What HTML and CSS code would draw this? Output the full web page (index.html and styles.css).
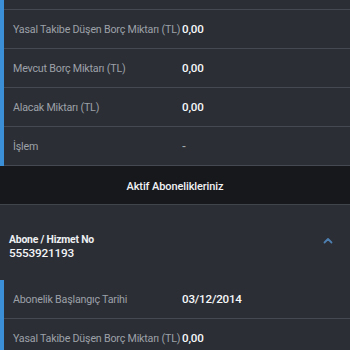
FILE: index.html
```html
<!DOCTYPE html>
<html lang="tr">
<head>
<meta charset="utf-8">
<link rel="stylesheet" href="styles.css">
</head>
<body>
<section class="details">
  <div class="row row-cut"></div>
  <div class="row"><span class="label">Yasal Takibe Düşen Borç Miktarı (TL)</span><span class="value">0,00</span></div>
  <div class="row"><span class="label">Mevcut Borç Miktarı (TL)</span><span class="value">0,00</span></div>
  <div class="row"><span class="label">Alacak Miktarı (TL)</span><span class="value">0,00</span></div>
  <div class="row"><span class="label">İşlem</span><span class="value dim">-</span></div>
</section>
<header class="section-title">Aktif Abonelikleriniz</header>
<div class="card-head">
  <div class="card-info">
    <div class="card-label">Abone / Hizmet No</div>
    <div class="card-number">5553921193</div>
  </div>
  <svg class="chevron" width="10" height="7" viewBox="0 0 10 7"><path d="M1.5 5.5 L5 2 L8.5 5.5" fill="none" stroke="#4d7fb0" stroke-width="1.8" stroke-linecap="round" stroke-linejoin="round"/></svg>
</div>
<section class="details">
  <div class="row"><span class="label">Abonelik Başlangıç Tarihi</span><span class="value">03/12/2014</span></div>
  <div class="row"><span class="label">Yasal Takibe Düşen Borç Miktarı (TL)</span><span class="value">0,00</span></div>
</section>
</body>
</html>
```
FILE: styles.css
```css
html, body {
  margin: 0;
  padding: 0;
  background: #2b2e35;
  font-family: Roboto, "Noto Sans", sans-serif;
  width: 350px;
  height: 350px;
  overflow: hidden;
}
.details {
  border-left: 4px solid #3a8fd6;
  background: #2b2e35;
}
.row {
  display: grid;
  grid-template-columns: 169px 1fr;
  align-items: center;
  height: 38px;
  padding-left: 9px;
  border-bottom: 1px solid #454951;
}
.row-cut {
  height: 9px;
}
.label {
  font-size: 10.7px;
  letter-spacing: -0.2px;
  color: #9da1a8;
  white-space: nowrap;
}
.value {
  font-size: 11.6px;
  letter-spacing: -0.2px;
  font-weight: 500;
  color: #f7f8fa;
}
.value.dim {
  color: #a4a8af;
}
.section-title {
  height: 39px;
  padding-top: 2px;
  box-sizing: border-box;
  background: #17181c;
  border-bottom: 1px solid #40444b;
  display: flex;
  align-items: center;
  justify-content: center;
  font-size: 11px;
  letter-spacing: -0.1px;
  font-weight: 500;
  color: #f1f2f4;
}
.card-head {
  height: 75px;
  display: flex;
  align-items: center;
  justify-content: space-between;
  padding: 8px 17px 0 9px;
  box-sizing: border-box;
}
.card-label {
  font-size: 10.4px;
  letter-spacing: -0.2px;
  font-weight: 700;
  color: #eef0f2;
  line-height: 13px;
}
.card-number {
  font-size: 11.8px;
  letter-spacing: -0.2px;
  font-weight: 500;
  color: #f4f5f7;
  line-height: 14px;
}
.chevron {
  margin-top: -12px;
}
```
